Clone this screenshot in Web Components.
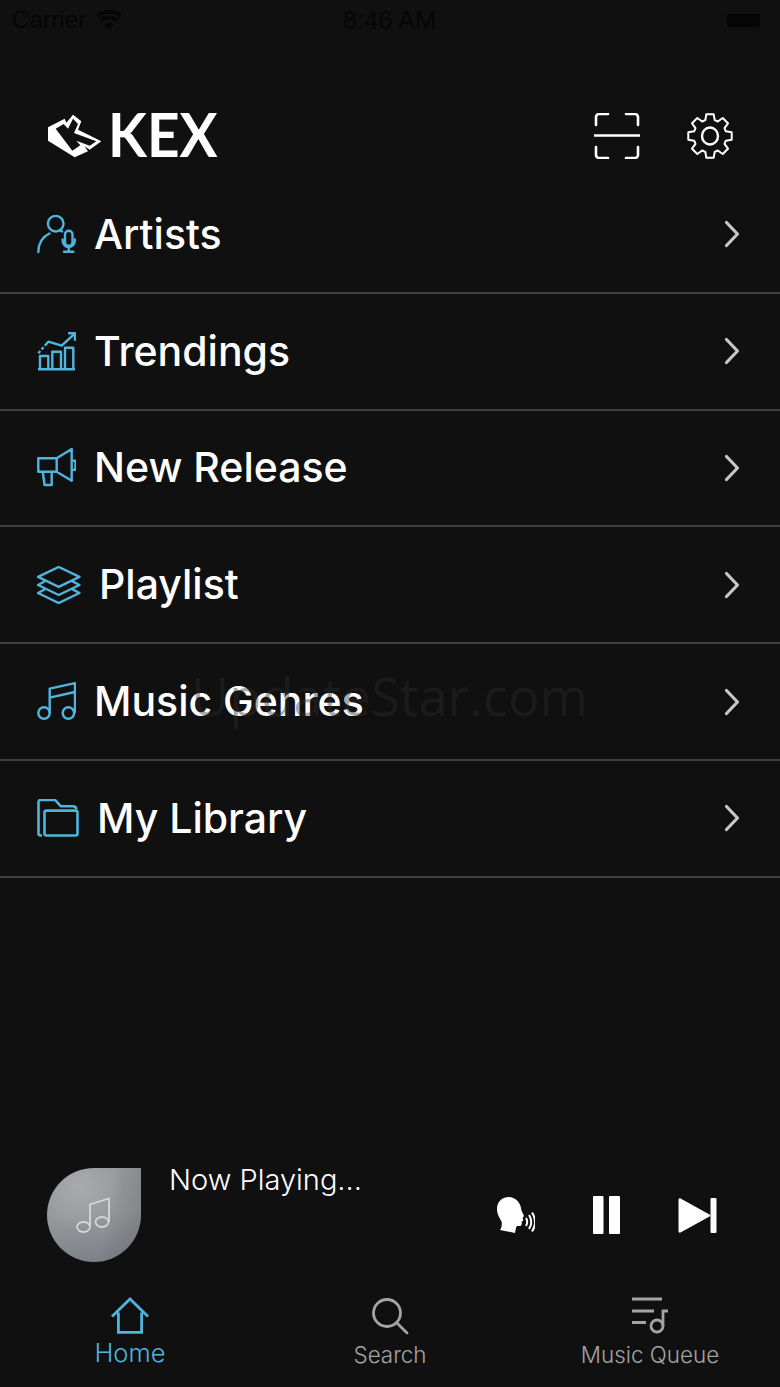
<!DOCTYPE html>
<html>
<head>
<meta charset="utf-8">
<title>KEX</title>
<style>
  html, body { margin: 0; padding: 0; background: #101011; }
  body { width: 780px; height: 1387px; overflow: hidden; font-family: Inter, "Liberation Sans", sans-serif; }
  kex-app svg { display: block; }
</style>
</head>
<body>
<kex-app>
  <kex-status-bar></kex-status-bar>
  <kex-header></kex-header>

  <menu-row label="Artists">
    <svg slot="icon" width="39" height="39" viewBox="0 0 39 39" fill="none" stroke="#4fb5de" stroke-width="2.4" stroke-linecap="round" stroke-linejoin="round">
      <circle cx="18.7" cy="8.7" r="7.8"/>
      <path d="M1.3 37C1.500 28 6 21.500 12.500 18.500M25 16.400l-1-.5"/>
      <rect x="28" y="15.7" width="7.5" height="15" rx="3.75"/>
      <path d="M25.600 24.500c0 4.500 2.500 7.500 6.100 7.500s6.200-3 6.200-7.500M31.700 32v4.800M27 36.800h9.400"/>
    </svg>
  </menu-row>
  <menu-row label="Trendings">
    <svg slot="icon" width="39" height="39" viewBox="0 0 39 39" fill="none" stroke="#4fb5de" stroke-width="2.400" stroke-linejoin="round">
      <path d="M1 37.300h37M3 37.300V24h8.300v13.300M15.300 37.300V19.700H24v17.600M28 37.300V15.700h8.300v21.600"/>
      <path d="M1.300 21.300l10-11.600 13.400 4L38 1.300" stroke-dasharray="3 2 3 2 100"/>
      <path d="M31 1.300h7v7.400"/>
    </svg>
  </menu-row>
  <menu-row label="New Release">
    <svg slot="icon" width="39" height="39" viewBox="0 0 39 39" fill="none" stroke="#4fb5de" stroke-width="2.400" stroke-linejoin="round">
      <path d="M1.300 10.300h18.400L34.700 1v31.700l-15-9H1.300zM19.700 10.300v13.400M5.700 23.700L7.600 37h7.100V23.700M34.700 12.700h3.800v9h-3.800"/>
    </svg>
  </menu-row>
  <menu-row label="Playlist">
    <svg slot="icon" width="44" height="38" viewBox="0 0 44 38" fill="none" stroke="#4fb5de" stroke-width="2.400" stroke-linejoin="round">
      <path d="M21.700 1l20.800 9.800-20.800 10-20.700-10z"/>
      <path d="M8 15.300L1 19l20.700 10 20.800-10-7.400-3.900"/>
      <path d="M8 23.300L1 27l20.700 10 20.800-10-7.400-3.900"/>
    </svg>
  </menu-row>
  <menu-row label="Music Genres">
    <svg slot="icon" width="39" height="39" viewBox="0 0 39 39" fill="none" stroke="#4fb5de" stroke-width="2.400" stroke-linejoin="round">
      <circle cx="7" cy="31" r="5.700"/>
      <circle cx="31.400" cy="31" r="5.700"/>
      <path d="M12.700 31V6.600L38 1.200V31M12.700 15.600L38 10"/>
    </svg>
  </menu-row>
  <menu-row label="My Library">
    <svg slot="icon" width="42" height="38" viewBox="0 0 42 38" fill="none" stroke="#4fb5de" stroke-width="2.600" stroke-linejoin="round">
      <path d="M5 36.500H3.500a2 2 0 0 1-2-2V3a2 2 0 0 1 2-2h14.600l5.600 6.200H36a3.500 3.500 0 0 1 3.400 3"/>
      <rect x="7.500" y="11.600" width="33" height="24.900" rx="2"/>
    </svg>
  </menu-row>

  <div class="spacer"></div>
  <mini-player title="Now Playing..."></mini-player>
  <tab-bar>
    <tab-item label="Home" active>
      <svg slot="icon" width="38" height="38" viewBox="0 0 38 38" fill="none" stroke="currentColor" stroke-width="2.800" stroke-linejoin="miter">
        <path d="M1 19.500L19 2l18 17.500M7.400 15.500V35.400h23.200V15.500"/>
      </svg>
    </tab-item>
    <tab-item label="Search">
      <svg slot="icon" width="38" height="38" viewBox="0 0 38 38" fill="none" stroke="currentColor" stroke-width="2.800" stroke-linecap="round">
        <circle cx="16" cy="16" r="13.500"/>
        <path d="M26 26l10 10"/>
      </svg>
    </tab-item>
    <tab-item label="Music Queue">
      <svg slot="icon" width="38" height="38" viewBox="0 0 38 38" fill="none" stroke="currentColor" stroke-width="2.800">
        <path d="M1 2h30M1 14h22M1 25.500h14"/>
        <circle cx="26" cy="29" r="6"/>
        <path d="M32 29V14h5"/>
      </svg>
    </tab-item>
  </tab-bar>
  <span class="watermark">UpdateStar.com</span>
</kex-app>

<script>
// gear outline, 8 square teeth
function gearPath(cx, cy, rOut, rIn) {
  let d = '';
  const teeth = 8;
  for (let i = 0; i < teeth; i++) {
    const a = (i / teeth) * Math.PI * 2 - Math.PI / 2;
    const pts = [[rIn, -0.29], [rOut, -0.17], [rOut, 0.17], [rIn, 0.29]];
    pts.forEach(([r, off]) => {
      const x = cx + r * Math.cos(a + off);
      const y = cy + r * Math.sin(a + off);
      d += (d ? 'L' : 'M') + x.toFixed(1) + ' ' + y.toFixed(1);
    });
  }
  return d + 'Z';
}

class KexApp extends HTMLElement {
  constructor() {
    super();
    this.attachShadow({ mode: 'open' });
    this.shadowRoot.innerHTML = `
      <style>
        :host { display: flex; flex-direction: column; position: relative; width: 780px; height: 1387px; color: #fff; }
        ::slotted(.spacer) { flex: 1; }
        ::slotted(.watermark) {
          position: absolute; left: 191px; top: 660px;
          font: 400 52.5px "Open Sans", sans-serif;
          color: rgba(44, 44, 44, .4); white-space: nowrap; pointer-events: none;
        }
      </style>
      <slot></slot>
    `;
  }
}

class KexStatusBar extends HTMLElement {
  constructor() {
    super();
    this.attachShadow({ mode: 'open' });
    this.shadowRoot.innerHTML = `
      <style>
        :host {
          display: grid; grid-template-columns: 1fr auto 1fr; align-items: center;
          height: 40px; padding: 0 20px 0 12px; box-sizing: border-box;
          font: 400 24.300px "Liberation Sans", sans-serif; color: #060606;
        }
        .left { display: flex; align-items: center; gap: 9px; }
        .right { display: flex; justify-content: flex-end; }
        .time { font-size: 25.500px; margin-left: 7px; }
        .batt { width: 33px; height: 13px; background: #050505; border-radius: 2px; }
      </style>
      <div class="left">
        <span>Carrier</span>
        <svg width="28" height="20" viewBox="0 0 28 20" fill="#060606">
          <path d="M14 20l-4.500-5.500a7 7 0 0 1 9 0zM7.500 12L5 9a14 14 0 0 1 18 0l-2.500 3a10 10 0 0 0-13 0zM3.500 7.500L1 4.500a20 20 0 0 1 26 0l-2.500 3a16 16 0 0 0-21 0z"/>
        </svg>
      </div>
      <span class="time">8:46 AM</span>
      <div class="right"><div class="batt"></div></div>
    `;
  }
}

class KexHeader extends HTMLElement {
  constructor() {
    super();
    this.attachShadow({ mode: 'open' });
    this.shadowRoot.innerHTML = `
      <style>
        :host {
          display: flex; align-items: center; box-sizing: border-box;
          height: 137px; padding: 54px 47px 0 47px;
        }
        .logo { display: flex; align-items: center; gap: 5px; flex: 1; }
        .word { margin-top: -5px; font: 700 61px/1 "Lato", sans-serif; color: #fff; transform: scaleX(.93); transform-origin: left center; }
        .actions { display: flex; align-items: center; gap: 47px; }
      </style>
      <div class="logo">
        <svg width="56" height="46" viewBox="22 25 168 138">
          <path fill="#fff" d="M25 68L75 42l5 12 20-24 25 20-10 25 20 10 50 25-35 25-15-10 10 15-40 18-80-50z"/>
          <path fill="#101011" d="M48 72L72 58 85 72 100 42l15 16-12 27 67 25-20 13-40-15 12 14-24 16z"/>
        </svg>
        <span class="word">KEX</span>
      </div>
      <div class="actions">
        <svg width="46" height="46" viewBox="0 0 46 46" fill="none" stroke="#fff" stroke-width="2.600" stroke-linecap="round" stroke-linejoin="round">
          <path d="M2 12V4a3 3 0 0 1 3-3h9M32 1h9a3 3 0 0 1 3 3v8M2 34v8a3 3 0 0 0 3 3h9M32 45h9a3 3 0 0 0 3-3v-8"/>
          <path d="M0 22.500h46" stroke-linecap="butt"/>
        </svg>
        <svg width="46" height="46" viewBox="0 0 46 46" fill="none" stroke="#fff" stroke-width="2" stroke-linejoin="round">
          <path d="${gearPath(23, 23, 22, 16.5)}"/>
          <ellipse cx="23" cy="23" rx="8" ry="8.500" stroke-width="2.400"/>
        </svg>
      </div>
    `;
  }
}

class MenuRow extends HTMLElement {
  constructor() {
    super();
    this.attachShadow({ mode: 'open' });
  }

  connectedCallback() {
    const label = this.getAttribute('label') || '';
    this.shadowRoot.innerHTML = `
      <style>
        :host {
          display: flex; align-items: center; gap: 18px; box-sizing: border-box;
          height: 116.8px; padding: 0 40px 0 37px;
          border-bottom: 2px solid #3f3f40;
        }
        .label { flex: 1; font: 500 41px/1 Inter, "Liberation Sans", sans-serif; color: #fff; white-space: nowrap; }
      </style>
      <slot name="icon"></slot>
      <span class="label">${label}</span>
      <svg width="16" height="28" viewBox="0 0 16 28" fill="none" stroke="#c8c8c8" stroke-width="3.200" stroke-linecap="round" stroke-linejoin="round">
        <path d="M2.500 2.500L13.500 14 2.500 25.500"/>
      </svg>
    `;
  }
}

class MiniPlayer extends HTMLElement {
  constructor() {
    super();
    this.attachShadow({ mode: 'open' });
  }

  connectedCallback() {
    const title = this.getAttribute('title') || '';
    this.shadowRoot.innerHTML = `
      <style>
        :host {
          display: flex; box-sizing: border-box; height: 94px;
          padding: 0 63px 0 47px; margin-bottom: 35px;
        }
        .cover {
          width: 94px; height: 94px; flex: none; border-radius: 50% 0 50% 50%;
          background:
            radial-gradient(circle at 35% 20%, rgba(176,178,181,.7), rgba(176,178,181,0) 45%),
            linear-gradient(100deg, rgba(0,0,0,0) 60%, rgba(60,60,60,.25) 100%),
            linear-gradient(175deg, #98999c 10%, #96989b 50%, #7b8086 100%);
          display: flex; align-items: center; justify-content: center;
        }
        .title { flex: 1; margin: -8px 0 0 28px; font: 300 29px/40px Inter, sans-serif; color: #fff; }
        .controls { display: flex; align-items: center; gap: 58px; }
      </style>
      <div class="cover">
        <svg width="36" height="38" viewBox="0 0 36 38" fill="none" stroke="#d4d6d8" stroke-width="1.800">
          <ellipse cx="7.500" cy="31" rx="6.500" ry="5"/>
          <ellipse cx="26" cy="26" rx="6.500" ry="5"/>
          <path d="M14 30V8.500L33 2.500V26"/>
        </svg>
      </div>
      <div class="title">${title}</div>
      <div class="controls">
        <svg width="38" height="36" viewBox="0 0 38 36" fill="#fff">
          <path d="M12 0C4.500 0 0 5 0 12c0 6 3 9 4.700 13 .3 3-.2 6-1.700 8l15 3c.5-3 1-6 2-7h3.500c1.500-1 1.500-3 1-4.500l1.500-.5c.5-1 0-2-.5-3l1.500-2c-1-3-3-5-3-8C23 5 18 0 12 0z"/>
          <g fill="none" stroke="#fff" stroke-width="2">
            <path d="M29 21c1.500 2.500 1.500 5.500 0 8M32 18c3 4 3 10 0 14M35 15.500c4 6 4 13 0 19"/>
          </g>
        </svg>
        <svg width="27" height="38" viewBox="0 0 27 38" fill="#fff">
          <rect x="0" y="0" width="10.500" height="38" rx="1"/>
          <rect x="16" y="0" width="11" height="38" rx="1"/>
        </svg>
        <svg width="39" height="35" viewBox="0 0 38 35" fill="#fff">
          <path d="M0 2c0-1.500 1-2.300 2.500-1.300L31 16.500c1 .7 1 1.300 0 2L2.500 34.300C1 35.300 0 34.500 0 33z"/>
          <rect x="32" y="0" width="6" height="35" rx="1"/>
        </svg>
      </div>
    `;
  }
}

class TabBar extends HTMLElement {
  constructor() {
    super();
    this.attachShadow({ mode: 'open' });
    this.shadowRoot.innerHTML = `
      <style>
        :host { display: grid; grid-template-columns: repeat(3, 1fr); height: 90px; }
      </style>
      <slot></slot>
    `;
  }
}

class TabItem extends HTMLElement {
  constructor() {
    super();
    this.attachShadow({ mode: 'open' });
  }

  connectedCallback() {
    const label = this.getAttribute('label') || '';
    this.shadowRoot.innerHTML = `
      <style>
        :host {
          display: flex; flex-direction: column; align-items: center;
          color: #a4a4a4; font: 300 22.400px/30px Inter, sans-serif;
        }
        :host([active]) { color: #4fb5de; font-size: 25.500px; }
        .label { margin-top: 5px; white-space: nowrap; }
        :host([active]) .label { margin-top: 3px; }
      </style>
      <slot name="icon"></slot>
      <span class="label">${label}</span>
    `;
  }
}

customElements.define('kex-app', KexApp);
customElements.define('kex-status-bar', KexStatusBar);
customElements.define('kex-header', KexHeader);
customElements.define('menu-row', MenuRow);
customElements.define('mini-player', MiniPlayer);
customElements.define('tab-bar', TabBar);
customElements.define('tab-item', TabItem);
</script>
</body>
</html>
